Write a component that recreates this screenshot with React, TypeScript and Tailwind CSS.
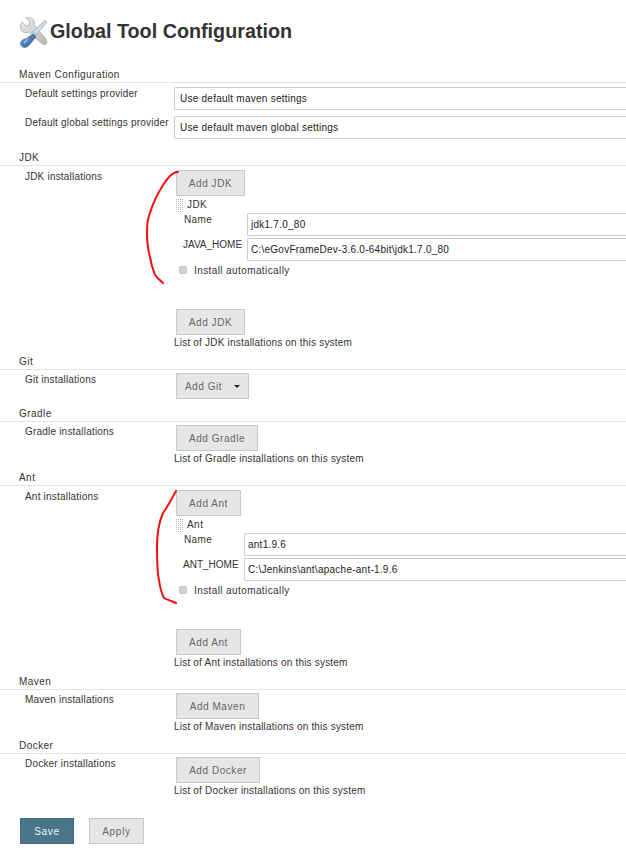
const font = { fontFamily: '"Liberation Sans", Arial, sans-serif' }

const ToolIcon = () => (
  <svg width="32" height="32" viewBox="0 0 32 32" className="shrink-0 mt-[2px]">
    <defs>
      <linearGradient id="metal" x1="0" y1="0" x2="1" y2="1">
        <stop offset="0" stopColor="#eceeeb" />
        <stop offset="1" stopColor="#b4b8b3" />
      </linearGradient>
      <linearGradient id="blue" x1="0" y1="0" x2="1" y2="1">
        <stop offset="0" stopColor="#6d9bd1" />
        <stop offset="1" stopColor="#2f639c" />
      </linearGradient>
    </defs>
    <path d="M4 5l4 4 3-1 1-3-4-4c3-1 7 0 8 3 1 2 0 3 0 4l12 14c1 2 1 4 0 5s-3 1-5-1L11 15c-2 1-4 1-6 0-3-2-3-7-1-10z" fill="url(#metal)" stroke="#a5a9a5" strokeWidth="0.8" />
    <path d="M27 3l2 2-11 13-3-3z" fill="#cfd9e2" stroke="#a3abb2" strokeWidth="0.8" />
    <path d="M15 17l3 3-6 7c-2 3-5 4-7 3s-3-3-2-5 3-3 5-3z" fill="url(#blue)" stroke="#3a699e" strokeWidth="0.8" />
    <path d="M6 26l4-4" stroke="#a8c6e8" strokeWidth="1.2" />
  </svg>
)

const SectionHeader = ({ title, className }: { title: string; className: string }) => (
  <div className={`pl-[19px] h-[19px] leading-[22px] border-b border-[#e2e2e2] text-[10px] tracking-[0.45px] text-[#333] ${className}`}>
    {title}
  </div>
)

const GrayButton = ({ label, className = '', caret }: { label: string; className?: string; caret?: boolean }) => (
  <button className={`h-[26px] border border-[#c8c8c8] bg-[#e6e6e6] text-[10px] tracking-[0.55px] text-[#666] flex items-center justify-center gap-[12px] ${className}`}>
    {label}
    {caret && <span className="w-0 h-0 border-x-[3px] border-x-transparent border-t-[3px] border-t-[#222]" />}
  </button>
)

const HelpText = ({ children, className = '' }: { children: string; className?: string }) => (
  <div className={`text-[10px] leading-[14px] mt-[1px] tracking-[0.2px] text-[#333] whitespace-nowrap ${className}`}>{children}</div>
)

const RowLabel = ({ children }: { children: string }) => (
  <div className="w-[175px] pl-[25px] shrink-0 text-[10px] leading-[14px] tracking-[0.2px] text-[#333] whitespace-nowrap">{children}</div>
)

const Field = ({ value, className = '' }: { value: string; className?: string }) => (
  <div className={`h-[23px] flex-1 border border-[#ccc] rounded-l-[2px] border-r-0 bg-white pl-[3px] leading-[21px] text-[10px] tracking-[0.25px] text-[#222] whitespace-nowrap overflow-hidden ${className}`}>
    {value}
  </div>
)

const Grip = () => (
  <svg width="7" height="13" className="shrink-0">
    <pattern id="grip" width="2" height="2" patternUnits="userSpaceOnUse">
      <rect width="1" height="1" fill="#b8b8b8" />
    </pattern>
    <rect width="7" height="13" fill="url(#grip)" />
  </svg>
)

const Installer = ({ kind, homeLabel, name, home, labelWidth, button, buttonClass }: { kind: string; homeLabel: string; name: string; home: string; labelWidth: string; button: string; buttonClass: string }) => (
  <div className="flex-1 min-w-0">
    <GrayButton label={button} className={buttonClass} />
    <div className="flex items-center mt-[3px] h-[13px]">
      <Grip />
      <span className="ml-[4px] mb-[2px] text-[10px] tracking-[0.45px] text-[#333]">{kind}</span>
    </div>
    <div className="flex mt-[1px] h-[23px]">
      <div className={`pl-[8px] text-[10px] leading-[14px] tracking-[0.4px] text-[#333] ${labelWidth}`}>Name</div>
      <Field value={name} />
    </div>
    <div className="flex mt-[2px] h-[23px]">
      <div className={`pl-[7px] text-[10px] leading-[14px] text-[#333] whitespace-nowrap ${labelWidth}`}>{homeLabel}</div>
      <Field value={home} />
    </div>
    <div className="flex items-center mt-[4px] h-[10px] pl-[3px]">
      <div className="w-[8px] h-[8px] rounded-[2px] bg-[#d4d4d4] border border-[#c2c2c2]" />
      <span className="ml-[7px] text-[10px] tracking-[0.4px] text-[#333]">Install automatically</span>
    </div>
    <GrayButton label={button} className={`mt-[34px] ${buttonClass}`} />
    <HelpText className="-ml-[2px]">{`List of ${kind} installations on this system`}</HelpText>
  </div>
)

export default function App() {
  return (
    <div className="relative w-[626px] h-[851px] overflow-hidden bg-white" style={font}>
      <div className="flex items-center pl-[18px] pt-[17px] h-[47px]">
        <ToolIcon />
        <h1 className="text-[19.75px] font-bold text-[#333] whitespace-nowrap">Global Tool Configuration</h1>
      </div>

      <SectionHeader title="Maven Configuration" className="mt-[17px]" />
      <div className="flex mt-[4px] h-[23px]">
        <RowLabel>Default settings provider</RowLabel>
        <Field value="Use default maven settings" className="-ml-[1px] pl-[5px]" />
      </div>
      <div className="flex mt-[6px] h-[23px]">
        <RowLabel>Default global settings provider</RowLabel>
        <Field value="Use default maven global settings" className="-ml-[1px] pl-[5px]" />
      </div>

      <SectionHeader title="JDK" className="mt-[8px]" />
      <div className="flex mt-[4px]">
        <RowLabel>JDK installations</RowLabel>
        <div className="pl-[1px] flex-1 min-w-0">
          <Installer kind="JDK" homeLabel="JAVA_HOME" name="jdk1.7.0_80" home="C:\eGovFrameDev-3.6.0-64bit\jdk1.7.0_80" labelWidth="w-[71px]" button="Add JDK" buttonClass="w-[69px]" />
        </div>
      </div>

      <SectionHeader title="Git" className="mt-[1px]" />
      <div className="flex mt-[3px]">
        <RowLabel>Git installations</RowLabel>
        <div className="pl-[1px]"><GrayButton label="Add Git" caret className="w-[73px]" /></div>
      </div>

      <SectionHeader title="Gradle" className="mt-[4px]" />
      <div className="flex mt-[3px]">
        <RowLabel>Gradle installations</RowLabel>
        <div className="pl-[1px]">
          <GrayButton label="Add Gradle" className="w-[82px]" />
          <HelpText className="-ml-[2px]">List of Gradle installations on this system</HelpText>
        </div>
      </div>

      <SectionHeader title="Ant" className="mt-[1px]" />
      <div className="flex mt-[4px]">
        <RowLabel>Ant installations</RowLabel>
        <div className="pl-[1px] flex-1 min-w-0">
          <Installer kind="Ant" homeLabel="ANT_HOME" name="ant1.9.6" home="C:\Jenkins\ant\apache-ant-1.9.6" labelWidth="w-[68px]" button="Add Ant" buttonClass="w-[65px]" />
        </div>
      </div>

      <SectionHeader title="Maven" className="mt-[1px]" />
      <div className="flex mt-[3px]">
        <RowLabel>Maven installations</RowLabel>
        <div className="pl-[1px]">
          <GrayButton label="Add Maven" className="w-[83px]" />
          <HelpText className="-ml-[2px]">List of Maven installations on this system</HelpText>
        </div>
      </div>

      <SectionHeader title="Docker" className="mt-[1px]" />
      <div className="flex mt-[3px]">
        <RowLabel>Docker installations</RowLabel>
        <div className="pl-[1px]">
          <GrayButton label="Add Docker" className="w-[84px]" />
          <HelpText className="-ml-[2px]">List of Docker installations on this system</HelpText>
        </div>
      </div>

      <div className="flex mt-[20px] ml-[20px] gap-[15px]">
        <button className="w-[54px] h-[26px] bg-[#4b758b] border border-[#3d6b82] text-[10px] tracking-[0.7px] text-[#f0f0f0]">Save</button>
        <button className="w-[55px] h-[26px] bg-[#e6e6e6] border border-[#c8c8c8] text-[10px] tracking-[0.7px] text-[#666]">Apply</button>
      </div>

      {/* red pen marks drawn over the screenshot */}
      <svg className="absolute left-0 top-0 pointer-events-none" width="626" height="851" fill="none" stroke="#f01010" strokeWidth="2" strokeLinecap="round">
        <path d="M178 172C172 172 168 178 163 185C158 193 153 203 150 213C147 220 147 225 147 232C147 242 148 250 150 257C151 264 153 270 155 275C158 279 161 281 163 283" />
        <path d="M176 491C172 498 168 506 163 513C159 522 157 535 157 547C157 560 157 572 159 580C160 588 162 594 164 598C167 600 172 601 176 603" />
      </svg>
    </div>
  )
}
